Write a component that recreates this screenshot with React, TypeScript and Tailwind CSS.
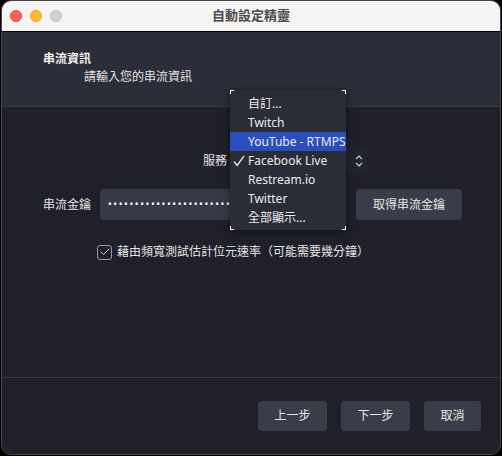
import { Check } from "lucide-react";

const font = { fontFamily: '"Noto Sans", "Noto Sans CJK TC", sans-serif' };

const services = ["自訂...", "Twitch", "YouTube - RTMPS", "Facebook Live", "Restream.io", "Twitter", "全部顯示..."];

function Corner({ pos }: { pos: string }) {
  return <span className={`absolute w-[4px] h-[4px] border-white ${pos}`} />;
}

function ServiceMenu() {
  return (
    <div className="absolute left-[228px] top-[89px] w-[116px] h-[140px] bg-[#2a2c36] shadow-[0_2px_8px_rgba(0,0,0,0.5)] pt-[4px]">
      <Corner pos="left-0 top-0 border-l border-t" />
      <Corner pos="right-0 top-0 border-r border-t" />
      <Corner pos="left-0 bottom-0 border-l border-b" />
      <Corner pos="right-0 bottom-0 border-r border-b" />
      {services.map((s) => (
        <div
          key={s}
          className={`relative h-[19px] flex items-center pl-[18px] text-[12px] text-[#ececec] whitespace-nowrap ${
            s === "YouTube - RTMPS" ? "bg-[#2a4ebd]" : ""
          }`}
        >
          {s === "Facebook Live" && (
            <svg className="absolute left-[3px] top-[4px]" width="12" height="12" viewBox="0 0 12 12">
              <path d="M1 6.5 L4.2 10.5 L11 1" fill="none" stroke="#ececec" strokeWidth="1.3" />
            </svg>
          )}
          {s}
        </div>
      ))}
    </div>
  );
}

function FooterButton({ label, w }: { label: string; w: string }) {
  return (
    <button className={`${w} h-[30px] rounded-[4px] bg-[#3a3d49] text-[12px] text-[#e6e6e6]`}>{label}</button>
  );
}

export default function App() {
  return (
    <div className="w-[502px] h-[456px] bg-black" style={font}>
      <div className="relative ml-px w-[500px] h-[455px] rounded-[10px] overflow-hidden border border-[#44464f] flex flex-col bg-[#1f2029]">
        {/* title bar */}
        <div className="h-[31px] shrink-0 bg-[#f6f4f2] border-b border-black flex items-center relative">
          <div className="absolute left-[8px] top-[9px] flex gap-[8px]">
            <span className="w-[12px] h-[12px] rounded-full bg-[#fe5f57] border border-[#e0443e]" />
            <span className="w-[12px] h-[12px] rounded-full bg-[#febc2e] border border-[#dea123]" />
            <span className="w-[12px] h-[12px] rounded-full bg-[#d1d0ce] border border-[#bdbcba]" />
          </div>
          <div className="w-full text-center text-[13px] font-semibold text-[#4b4b4b]">自動設定精靈</div>
        </div>

        {/* page header */}
        <div className="h-[75px] shrink-0 bg-[#2b2d38] border-b border-[#3a3c48] pl-[41px] pt-[18px] text-[#f2f2f2]">
          <div className="text-[12px] font-bold leading-[18px]">串流資訊</div>
          <div className="text-[12px] leading-[18px] pl-[41px] text-[#e4e4e4]">請輸入您的串流資訊</div>
        </div>

        {/* form */}
        <div className="flex-1 pt-[40px] text-[12px] text-[#e6e6e6]">
          <div className="flex items-center h-[27px]">
            <span className="w-[228px] text-right pr-[3px]">服務</span>
            <div className="w-[139px] h-[27px] rounded-[4px] bg-[#23252e] flex items-center justify-end pr-[6px]">
              <svg width="8" height="14" viewBox="0 0 8 14">
                <path d="M1 5 L4 2 L7 5 M1 9 L4 12 L7 9" fill="none" stroke="#cfcfcf" strokeWidth="1.1" />
              </svg>
            </div>
          </div>

          <div className="flex items-center mt-[15px] h-[31px]">
            <span className="w-[98px] pl-[41px]">串流金鑰</span>
            <div className="w-[245px] h-[31px] rounded-[4px] bg-[#373a46] flex items-center pl-[8px] text-[10px] tracking-[1.6px] text-white overflow-hidden whitespace-nowrap">
              ••••••••••••••••••••••••••••••••••
            </div>
            <button className="ml-[11px] w-[106px] h-[31px] rounded-[4px] bg-[#3a3d49] text-[#e6e6e6]">取得串流金鑰</button>
          </div>

          <label className="flex items-center mt-[23px] ml-[95px] gap-[5px]">
            <span className="w-[15px] h-[15px] rounded-[3px] border border-[#9a9ba0] flex items-center justify-center">
              <Check size={12} strokeWidth={2} className="text-[#d8d8d8]" />
            </span>
            <span>藉由頻寬測試估計位元速率（可能需要幾分鐘）</span>
          </label>
        </div>

        {/* footer */}
        <div className="h-[77px] shrink-0 border-t border-[#363844] flex justify-end items-start pt-[23px] pr-[19px] gap-[14px]">
          <FooterButton label="上一步" w="w-[69px]" />
          <FooterButton label="下一步" w="w-[69px]" />
          <FooterButton label="取消" w="w-[57px]" />
        </div>

        <ServiceMenu />
      </div>
    </div>
  );
}
